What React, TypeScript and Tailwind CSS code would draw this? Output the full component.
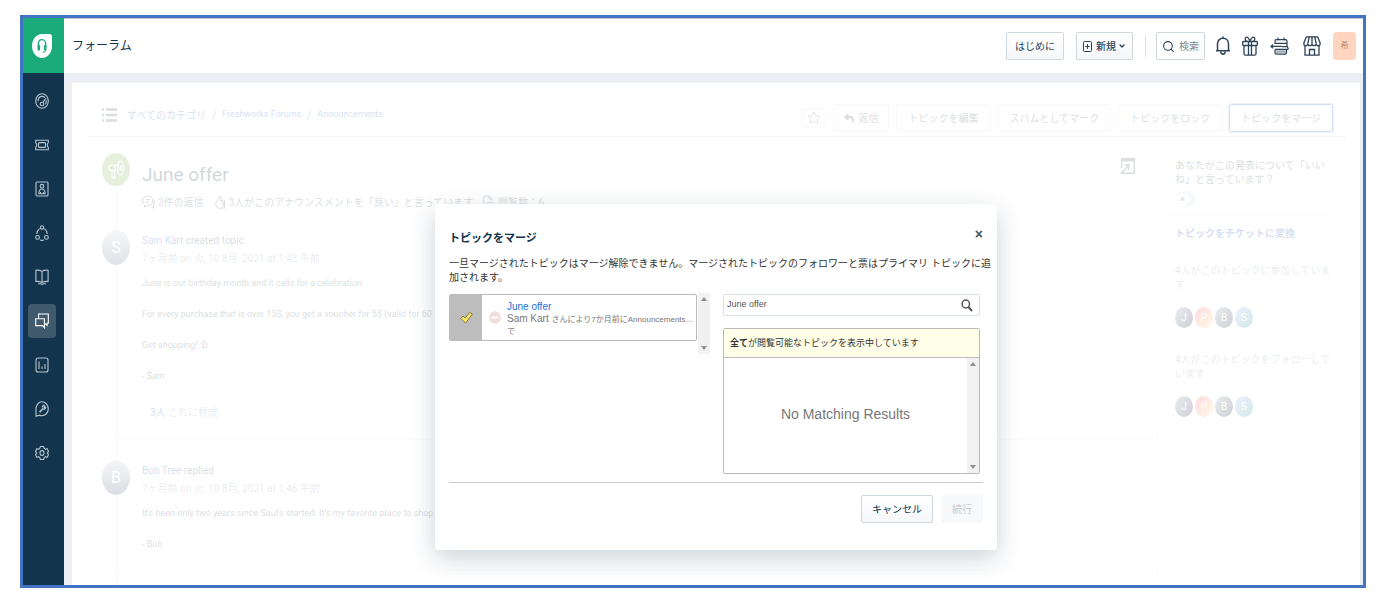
import type { ReactNode } from 'react';
import { clsx } from 'clsx';
import { Bell, ChevronDown, Search, Star } from 'lucide-react';
import { FaReply } from 'react-icons/fa';

const navItems: { label: string; icon: ReactNode }[] = [
  {
    label: 'ダッシュボード',
    icon: (
      <>
        <ellipse cx="7" cy="8" rx="6.3" ry="7.2" />
        <circle cx="7" cy="11" r="1.8" />
        <path d="M8 9.4 10.8 5.4M3 8.2C3.2 5 5 3.4 7 3.4c1.2 0 2.2.5 3 1.3M11.2 7.4c.2 1.6-.1 2.8-.8 3.8" />
      </>
    ),
  },
  {
    label: 'チケット',
    icon: (
      <>
        <path d="M.7 3.2h12.6v2.6c-1.3.4-1.3 4 0 4.4v2.6H.7v-2.6c1.3-.4 1.3-4 0-4.4z" />
        <rect x="3.5" y="5.6" width="7" height="4.8" rx="1" />
      </>
    ),
  },
  {
    label: '連絡先',
    icon: (
      <>
        <rect x="1" y="1" width="12" height="14" rx="1" />
        <circle cx="7" cy="5.2" r="1.8" />
        <path d="M3.8 12.8c.2-3 1.4-4.8 3.2-4.8s3 1.8 3.2 4.8zM5.6 12.6V11M8.4 12.6V11" />
      </>
    ),
  },
  {
    label: 'ソーシャル',
    icon: (
      <>
        <circle cx="7" cy="2.4" r="1.7" />
        <circle cx="2.6" cy="12.4" r="1.9" />
        <circle cx="11.4" cy="12.4" r="1.9" />
        <path d="M4.6 3.6C2.8 5 1.8 6.8 1.7 9M9.4 3.6c1.8 1.4 2.8 3.2 2.9 5.4M5 15c1.3.5 2.7.5 4 0" />
      </>
    ),
  },
  {
    label: 'ソリューション',
    icon: (
      <>
        <path d="M7 2.4C5 1 3 1 .9 1.2v11.2c2.2-.2 4.2 0 6.1 1.2 1.9-1.2 3.9-1.4 6.1-1.2V1.2C11 1 9 1 7 2.4zM7 2.4v11" />
        <path d="M3 14.8h2.6l1.4.7 1.4-.7H11" />
      </>
    ),
  },
  {
    label: 'フォーラム',
    icon: (
      <>
        <path d="M3.6 5V1h9.700v9.200h-1.300v2.300L9.800 10.400" />
        <path d="M.7 5.800h8.700v9L7.500 12.600H.7z" />
      </>
    ),
  },
  {
    label: 'レポート',
    icon: (
      <>
        <rect x="1" y="1" width="12" height="14" rx="2" />
        <path d="M4 4.500v7.500M7 9.500V12M10 7v5" />
      </>
    ),
  },
  {
    label: 'フィールド',
    icon: (
      <>
        <path d="M1 15.200V7.800C1 3.800 3.600.8 7 .8s6.300 3 6.300 7-2.900 6.900-6.300 6.900c-.9 0-1.700-.2-2.400-.5z" />
        <path d="M4.600 11.200 8 7.400M10.300 5.200 8.900 6.700M7.600 6.400c-.1-1.500.8-2.300 2-2.200M8.200 8c1.300.2 2.300-.7 2.300-2" strokeWidth="1.500" />
      </>
    ),
  },
  {
    label: '管理者',
    icon: (
      <>
        <path d="M5.400 1.500h3.200l.6 2 1.300.8 1.700-.7 1.300 2.800L12.300 8l1.200 1.600-1.300 2.800-1.700-.7-1.300.8-.6 2H5.400l-.6-2-1.300-.8-1.700.7L.5 9.600 1.700 8 .5 6.400l1.300-2.800 1.700.7 1.300-.8z" />
        <ellipse cx="7" cy="8" rx="2" ry="2.400" />
      </>
    ),
  },
];

const people = [
  { initial: 'J', color: 'from-slate-400 to-slate-900' },
  { initial: 'P', color: 'from-rose-500 to-amber-200' },
  { initial: 'B', color: 'from-slate-400 to-slate-900' },
  { initial: 'S', color: 'from-indigo-300 to-teal-600' },
];

const posts = [
  {
    initial: 'S',
    color: 'from-gray-300 to-slate-500',
    name: 'Sam Kart',
    action: 'created topic',
    date: '7ヶ月前 on 火, 10 8月, 2021 at 1:43 午前',
    body: [
      'June is our birthday month and it calls for a celebration.',
      'For every purchase that is over 15$, you get a voucher for 5$ (valid for 60',
      'Get shopping! :D',
      '- Sam',
    ],
    likes: '3人',
  },
  {
    initial: 'B',
    color: 'from-gray-300 to-slate-600',
    name: 'Bob Tree',
    action: 'replied',
    date: '7ヶ月前 on 火, 10 8月, 2021 at 1:46 午前',
    body: ["It's been only two years since Saul's started. It's my favorite place to shop", '- Bob'],
  },
];

function Sidebar() {
  return (
    <nav className="flex w-[41px] shrink-0 flex-col bg-[#12344d]">
      <a href="#home" aria-label="ホーム" className="flex h-[55px] items-center justify-center bg-[#1bab7b] pr-[3px]">
        <svg width="20" height="24" viewBox="0 0 20 24">
          <path d="M10 0h7.500C19 0 20 1 20 2.700V12c0 6.600-4.500 12-10 12S0 18.600 0 12 4.500 0 10 0z" fill="#fff" />
          <path d="M6.300 12.500V10c0-2.700 1.600-4.300 3.700-4.300s3.700 1.600 3.700 4.300v2.500" fill="none" stroke="#1bab7b" strokeWidth="1.300" />
          <rect x="5.500" y="11" width="2.600" height="5.600" rx="1" fill="#1bab7b" />
          <rect x="11.900" y="11" width="2.600" height="5.600" rx="1" fill="#1bab7b" />
          <path d="M13.800 16c0 1.500-1 2.300-3 2.300" fill="none" stroke="#1bab7b" />
        </svg>
      </a>
      <ul className="flex flex-col items-center gap-[10px] pt-[11px] pr-[3px]">
        {navItems.map((item) => (
          <li key={item.label}>
            <a
              href="#nav"
              aria-label={item.label}
              className={clsx(
                'flex h-[34px] w-7 items-center justify-center rounded-sm',
                item.label === 'フォーラム' ? 'bg-[#41596c] text-white' : 'text-[#b9c5cf]'
              )}
            >
              <svg width="14" height="16" viewBox="0 0 14 16" fill="none" stroke="currentColor" strokeWidth="1.100">
                {item.icon}
              </svg>
            </a>
          </li>
        ))}
      </ul>
    </nav>
  );
}

function GiftIcon() {
  return (
    <svg width="16" height="20" viewBox="0 0 16 20" fill="none" stroke="currentColor" strokeWidth="1.300">
      <rect x=".7" y="5.500" width="14.600" height="4" rx=".8" />
      <path d="M2 9.500v8.200c0 .9.500 1.500 1.300 1.500h9.400c.8 0 1.300-.6 1.300-1.500V9.500M6.500 5.500v13.700M9.500 5.500v13.700" />
      <path d="M8 5.300C6.800 2.200 5.500.8 4.200 1.300 2.700 1.900 3 4.300 4.600 5.300M8 5.300c1.200-3.100 2.500-4.500 3.800-4 1.500.6 1.200 3-.4 4" />
    </svg>
  );
}

function CalendarIcon() {
  return (
    <svg width="19" height="18" viewBox="0 0 19 18" fill="none" stroke="currentColor" strokeWidth="1.200">
      <path d="M5 6.500V4.300c0-1 .6-1.600 1.500-1.600h9c.9 0 1.500.6 1.500 1.600v5.500M4.500 6.400H17M8 .6v3M14 .6v3" />
      <path d="M.8 9.400h11M3 7.500 1 9.400l2 1.900" />
      <path d="M5 12.400h12.300c.7 0 1-.5.8-1.100l-.9-1.700H12M5 12.400v3c0 1 .6 1.700 1.500 1.700h8.500c.9 0 1.500-.7 1.500-1.700v-3" />
      <path d="M6 14.600h10" stroke="#a5b0ba" strokeWidth="2.600" />
    </svg>
  );
}

function StoreIcon() {
  return (
    <svg width="18" height="20" viewBox="0 0 18 20" fill="none" stroke="currentColor" strokeWidth="1.300">
      <path d="M3.300.8h11.400l2.500 6.400c0 1.600-.8 2.500-2 2.500s-2.100-.9-2.100-2.500c0 1.600-.8 2.500-2 2.500S9 8.800 9 7.200c0 1.600-.9 2.500-2.100 2.500s-2-.9-2-2.500c0 1.600-.9 2.500-2.100 2.500S.8 8.800.8 7.200z" />
      <path d="M6.300.8 4.900 7.200M9 .8v6.400M11.700.8l1.400 6.400M2 9.600v9.600h14V9.600M6.500 19v-5.500h5V19" />
    </svg>
  );
}

function Header() {
  return (
    <header className="flex h-[55px] shrink-0 items-center border-t border-[#c3c9d0] bg-white pr-[7px] pl-2 text-[#2c4257]">
      <h1 className="text-xs text-[#12344d]">フォーラム</h1>
      <div className="ml-auto flex items-center">
        <button className="h-7 rounded-xs border border-[#cfd7df] bg-linear-to-b from-white to-[#f5f7f9] px-2">
          はじめに
        </button>
        <button className="ml-3 flex h-7 items-center gap-1 rounded-xs border border-[#cfd7df] bg-linear-to-b from-white to-[#f5f7f9] px-[6px] font-medium">
          <svg width="9" height="11" viewBox="0 0 9 11" fill="none" stroke="currentColor">
            <rect x=".5" y=".5" width="8" height="10" rx="1" />
            <path d="M4.500 3v5M2.200 5.500h4.600" />
          </svg>
          <span className="flex items-center gap-[2px]">
            新規
            <ChevronDown size={8} strokeWidth={4} />
          </span>
        </button>
        <span className="ml-3 h-[22px] w-px bg-[#dde2e7]" />
        <label className="ml-[10px] flex h-7 w-[49px] items-center gap-1 rounded-xs border border-[#cfd7df] pl-[5px]">
          <Search size={13} className="shrink-0" />
          <input type="text" aria-label="検索" placeholder="検索" className="w-6 min-w-0 outline-none placeholder:text-[#7c8894]" />
        </label>
        <button aria-label="通知" className="ml-[9px]">
          <svg width="18" height="20" viewBox="0 0 18 20" fill="none" stroke="currentColor" strokeWidth="1.500">
            <path d="M3.500 14.500V7.800C3.500 4.600 5.800 2.300 9 2.300s5.500 2.300 5.500 5.500v6.700M2 14.800h14M9 .6v1.700" />
            <path d="M6.800 15.500c.1 1.800 1 2.700 2.200 2.700s2.100-.9 2.200-2.700" />
          </svg>
        </button>
        <button aria-label="新着情報" className="ml-[10px]">
          <GiftIcon />
        </button>
        <button aria-label="予定" className="ml-3">
          <CalendarIcon />
        </button>
        <button aria-label="マーケットプレイス" className="ml-[14px]">
          <StoreIcon />
        </button>
        <button className="ml-3 h-7 w-[23px] rounded-sm bg-[#ffd5c0] text-[8px] text-[#b98a72]">希</button>
      </div>
    </header>
  );
}

function Toolbar() {
  const buttons = ['トピックを編集', 'スパムとしてマーク', 'トピックをロック', 'トピックをマージ'];
  return (
    <div className="mx-[14px] flex items-start border-b border-[#cfd7df] pt-[21px] pr-[13px] pb-1 pl-4">
      <div className="flex h-[22px] items-center text-[#2c5cc5]">
        <svg width="15" height="14" viewBox="0 0 15 14" stroke="#475867" strokeWidth="2.600" className="mr-[10px]">
          <path d="M0 1.500h2M4 1.500h11M0 7h2M4 7h11M0 12.500h2M4 12.500h11" />
        </svg>
        <a href="#categories">すべてのカテゴリ</a>
        <span className="mx-[6px]">/</span>
        <a href="#forums" className="text-[9px]">Freshworks Forums</a>
        <span className="mx-[6px]">/</span>
        <a href="#announcements" className="text-[9px]">Announcements</a>
      </div>
      <div className="ml-auto flex items-center gap-[7px] text-[#475867]">
        <button aria-label="お気に入り" className="flex h-5 w-6 items-center justify-center rounded-xs border border-[#dde2e7]">
          <Star size={14} strokeWidth={1.5} />
        </button>
        <button className="flex h-7 items-center gap-1 rounded-xs border border-[#dde2e7] px-[10px]">
          <FaReply size={10} />
          返信
        </button>
        {buttons.map((label) => (
          <button
            key={label}
            className={clsx(
              'h-7 rounded-xs border px-[11px]',
              label === 'トピックをマージ' ? 'border-[#2c5cc5] ring-1 ring-[#a8c0ee]' : 'border-[#dde2e7]'
            )}
          >
            {label}
          </button>
        ))}
      </div>
    </div>
  );
}

function TopicHeader() {
  return (
    <div className="-ml-[15px] flex gap-3 pr-[22px]">
      <span className="flex h-[33px] w-7 shrink-0 items-center justify-center rounded-[50%] bg-[#86b24f]">
        <svg width="16" height="20" viewBox="0 0 16 20" fill="none" stroke="#fff" strokeWidth="1.100">
          <ellipse cx="12.500" cy="8" rx="2.600" ry="7.200" />
          <path d="M10 5.300H2.500C1.300 5.300.8 6.200.8 7.800s.5 2.500 1.700 2.500H10M4 10.300V18h2.600v-7.700M7.200 5.300v5M13.800 6.500h-1.600v3h1.600" />
        </svg>
      </span>
      <div className="pt-[7px]">
        <h2 className="text-[19px] leading-[30px] text-[#12344d]">June offer</h2>
        <div className="mt-1 flex h-4 items-center text-[#475867]">
          <svg width="13" height="14" viewBox="0 0 13 14" fill="none" stroke="currentColor" className="mr-[3px]">
            <path d="M2.500 9.500C1.200 8.700.6 7.600.6 6 .6 3 2.800 1 5.700 1s5 2 5 4.800-2.200 4.700-5 4.700L2.500 12zM3.500 4.500h4.600M3.500 7h3.600" />
            <path d="M11 4.500c2 2 1.800 5 .2 6.500l.6 2.300-2.600-1.200" />
          </svg>
          3件の返信
          <svg width="11" height="14" viewBox="0 0 11 14" fill="none" stroke="currentColor" className="mr-[3px] ml-[11px]">
            <path d="M8 5.500H5.600C6.400 3.500 6.300 1 4.800 1 3.900 1 4.300 3 3.400 4.300 2.500 5.500.8 6.500.8 9.300s1.600 4 3.700 4H8zM9.500 5v8.500" />
          </svg>
          3人がこのアナウンスメントを「良い」と言っています
          <svg width="12" height="14" viewBox="0 0 12 14" fill="none" stroke="currentColor" className="mr-[3px] ml-[10px]">
            <path d="M4 12.500H.8V1h5.500l2.500 2.500v2M6 1v3h3" />
            <ellipse cx="7.500" cy="9.800" rx="4" ry="2.600" />
            <circle cx="7.500" cy="9.800" r="1" />
          </svg>
          閲覧数：6
        </div>
      </div>
      <button aria-label="ポータルで表示" className="mt-[5px] ml-auto self-start">
        <svg width="14" height="16" viewBox="0 0 14 16" fill="none" stroke="#475867" strokeWidth="1.400">
          <path d="M.7 10V.7h12.600v14.600H.7V13" />
          <path d="M1 2.200h12.300" strokeWidth="2.400" />
          <path d="M1 14.500 7.500 7.500M3.500 7h4.300v5" />
        </svg>
      </button>
    </div>
  );
}

function PostList() {
  return (
    <>
      {posts.map((post) => (
        <article key={post.initial} className="flex gap-3 border-b border-[#ebeff3] pt-5 pb-[17px]">
          <span
            className={clsx(
              '-ml-[15px] flex h-[35px] w-7 shrink-0 items-center justify-center rounded-[50%] bg-linear-to-b text-base text-white',
              post.color
            )}
          >
            {post.initial}
          </span>
          <div className="pt-[2px] text-[#475867]">
            <div className="leading-[18px]">
              <a href="#profile" className="text-[#2c5cc5]">{post.name}</a> {post.action}
            </div>
            <div className="leading-[18px] text-[#92a2b1]">{post.date}</div>
            <div className="mt-2 flex flex-col gap-4 text-[9px] leading-[15px]">
              {post.body.map((line) => (
                <p key={line}>{line}</p>
              ))}
            </div>
            {post.likes && (
              <div className="mt-5 border-l border-[#ebeff3] pl-[7px] leading-[18px] text-[#92a2b1]">
                <a href="#likes" className="text-[#2c5cc5]">{post.likes}</a> これに賛成
              </div>
            )}
          </div>
        </article>
      ))}
    </>
  );
}

function PeopleBlock({ title }: { title: string }) {
  return (
    <section className="border-b border-[#ebeff3] py-3 pl-[6px] text-[#92a2b1]">
      <h3 className="leading-[14px]">{title}</h3>
      <ul className="mt-[15px] flex gap-[2px]">
        {people.map((p) => (
          <li
            key={p.initial}
            className={clsx(
              'flex h-[21px] w-[18px] items-center justify-center rounded-[50%] bg-linear-to-br text-white',
              p.color
            )}
          >
            {p.initial}
          </li>
        ))}
      </ul>
    </section>
  );
}

function TopicAside() {
  return (
    <aside className="w-[189px] shrink-0 border-x border-[#ebeff3] pr-[11px] pl-[11px] text-[#475867]">
      <section className="border-b border-[#ebeff3] pt-[22px] pb-2 pl-[6px]">
        <p className="leading-[14px]">あなたがこの発表について「いいね」と言っています？</p>
        <button
          role="switch"
          aria-checked="false"
          aria-label="いいね"
          className="mt-1 flex h-4 w-[21px] items-center rounded-full bg-[#dfe8ea] pl-px"
        >
          <span className="flex size-[13px] items-center justify-center rounded-full bg-white text-[9px] leading-none font-bold">×</span>
        </button>
      </section>
      <section className="border-b border-[#ebeff3] pl-[6px] leading-[35px] font-bold">
        <a href="#convert" className="text-[#2c5cc5]">トピックをチケットに変換</a>
      </section>
      <PeopleBlock title="4人がこのトピックに参加しています" />
      <PeopleBlock title="4人がこのトピックをフォローしています" />
    </aside>
  );
}

function ScrollTrack() {
  return (
    <div className="flex w-3 shrink-0 flex-col items-center justify-between bg-[#f1f1f1] py-1">
      <svg width="6" height="4" viewBox="0 0 6 4" fill="#8f8f8f">
        <path d="M0 4 3 0l3 4z" />
      </svg>
      <svg width="6" height="4" viewBox="0 0 6 4" fill="#8f8f8f">
        <path d="M0 0h6L3 4z" />
      </svg>
    </div>
  );
}

function MergeDialog() {
  return (
    <div
      role="dialog"
      aria-labelledby="merge-title"
      className="w-[562px] max-w-full rounded-sm bg-white px-[14px] pt-[26px] pb-[27px] font-['Liberation_Sans','Noto_Sans_CJK_JP',sans-serif] text-[#333] shadow-[0_8px_24px_rgba(18,52,77,0.22)]"
    >
      <div className="flex h-4 items-center justify-between">
        <h2 id="merge-title" className="text-[11px] font-bold text-[#12344d]">トピックをマージ</h2>
        <button aria-label="閉じる" className="-mt-2 text-sm leading-none font-bold text-[#475867]">×</button>
      </div>
      <p className="-mr-3 mt-[11px] leading-[14px]">
        一旦マージされたトピックはマージ解除できません。マージされたトピックのフォロワーと票はプライマリ トピックに追加されます。
      </p>
      <div className="mt-2 flex border-b border-[#ccc] pb-2">
        <div className="flex h-[61px] flex-1 items-start gap-px">
          <div className="mt-px flex h-[47px] flex-1 overflow-hidden rounded-xs border border-[#bbb]">
            <span className="flex w-8 items-center justify-center bg-[#bdbdbd]">
              <svg width="13" height="13" viewBox="0 0 13 13" fill="#ffe566" stroke="#77703a" strokeWidth=".9">
                <path d="M.8 7.400 3 5l2.300 2L9.800 1.200l2.500 2-6.800 8.900z" />
              </svg>
            </span>
            <button aria-label="削除" className="mr-[6px] ml-[7px]">
              <svg width="12" height="13" viewBox="0 0 12 13">
                <ellipse cx="6" cy="6.500" rx="5.800" ry="6.300" fill="#f2dcdc" />
                <path d="M2.500 6.500h7" stroke="#fff" strokeWidth="2.200" />
              </svg>
            </button>
            <div className="pt-[5px] leading-3 whitespace-nowrap text-[#777]">
              <a href="#topic" className="block leading-[13px] text-[#1a73d9]">June offer</a>
              Sam Kart <span className="text-[8px]">さんにより7か月前にAnnouncements…</span>
              <span className="block text-[8px]">で</span>
            </div>
          </div>
          <div className="flex h-full">
            <ScrollTrack />
          </div>
        </div>
        <div className="mr-[3px] ml-[13px] w-[257px] pt-px">
          <label className="flex h-[22px] items-center rounded-xs border border-[#dae1e4] px-[3px]">
            <input type="text" aria-label="トピックを検索" defaultValue="June offer" className="min-w-0 flex-1 text-[9px] text-[#555] outline-none" />
            <svg width="12" height="13" viewBox="0 0 12 13" fill="none" stroke="#555" className="mr-[3px]">
              <ellipse cx="4.800" cy="5" rx="3.700" ry="4" strokeWidth="1.500" />
              <path d="m7.500 8 3.500 4" strokeWidth="2" />
            </svg>
          </label>
          <div className="mt-3 overflow-hidden rounded-xs border border-[#bbb]">
            <p className="border-b border-[#bbb] bg-[#ffffe9] pl-[6px] text-[9px] leading-7">
              <b>全て</b>が閲覧可能なトピックを表示中しています
            </p>
            <div className="flex h-[115px]">
              <p className="flex flex-1 items-center justify-center pb-1 text-sm text-[#777]">No Matching Results</p>
              <ScrollTrack />
            </div>
          </div>
        </div>
      </div>
      <div className="mt-3 flex justify-end gap-2">
        <button className="h-7 rounded-xs border border-[#cfd7df] bg-linear-to-b from-white to-[#f5f7f9] px-[10px] text-[#12344d]">
          キャンセル
        </button>
        <button disabled className="h-7 rounded-xs bg-[#f7f9fb] px-[11px] text-[#c5ccd3]">続行</button>
      </div>
    </div>
  );
}

export default function App() {
  return (
    <div lang="ja" className="flex min-h-screen bg-white pt-[15px] pr-3 pb-6 pl-5 font-[Roboto,'Noto_Sans_CJK_JP',sans-serif] text-[10px]">
      <div className="flex min-w-0 flex-1 border-3 border-[#4472c4]">
        <Sidebar />
        <div className="flex min-w-0 flex-1 flex-col">
          <Header />
          <main className="flex flex-1 bg-[#ebeef2] pt-[10px] pr-[3px] pl-2">
            <div className="relative flex min-w-0 flex-1 flex-col bg-white">
              <Toolbar />
              <div className="mx-[14px] flex flex-1">
                <div className="mt-4 ml-[30px] min-w-0 flex-1 border-l border-[#dfe4e8]">
                  <TopicHeader />
                  <PostList />
                </div>
                <TopicAside />
              </div>
              {/* backdrop + dialog */}
              <div className="absolute inset-0 flex items-start justify-center bg-white/80 pt-[121px]">
                <MergeDialog />
              </div>
            </div>
          </main>
        </div>
      </div>
    </div>
  );
}
